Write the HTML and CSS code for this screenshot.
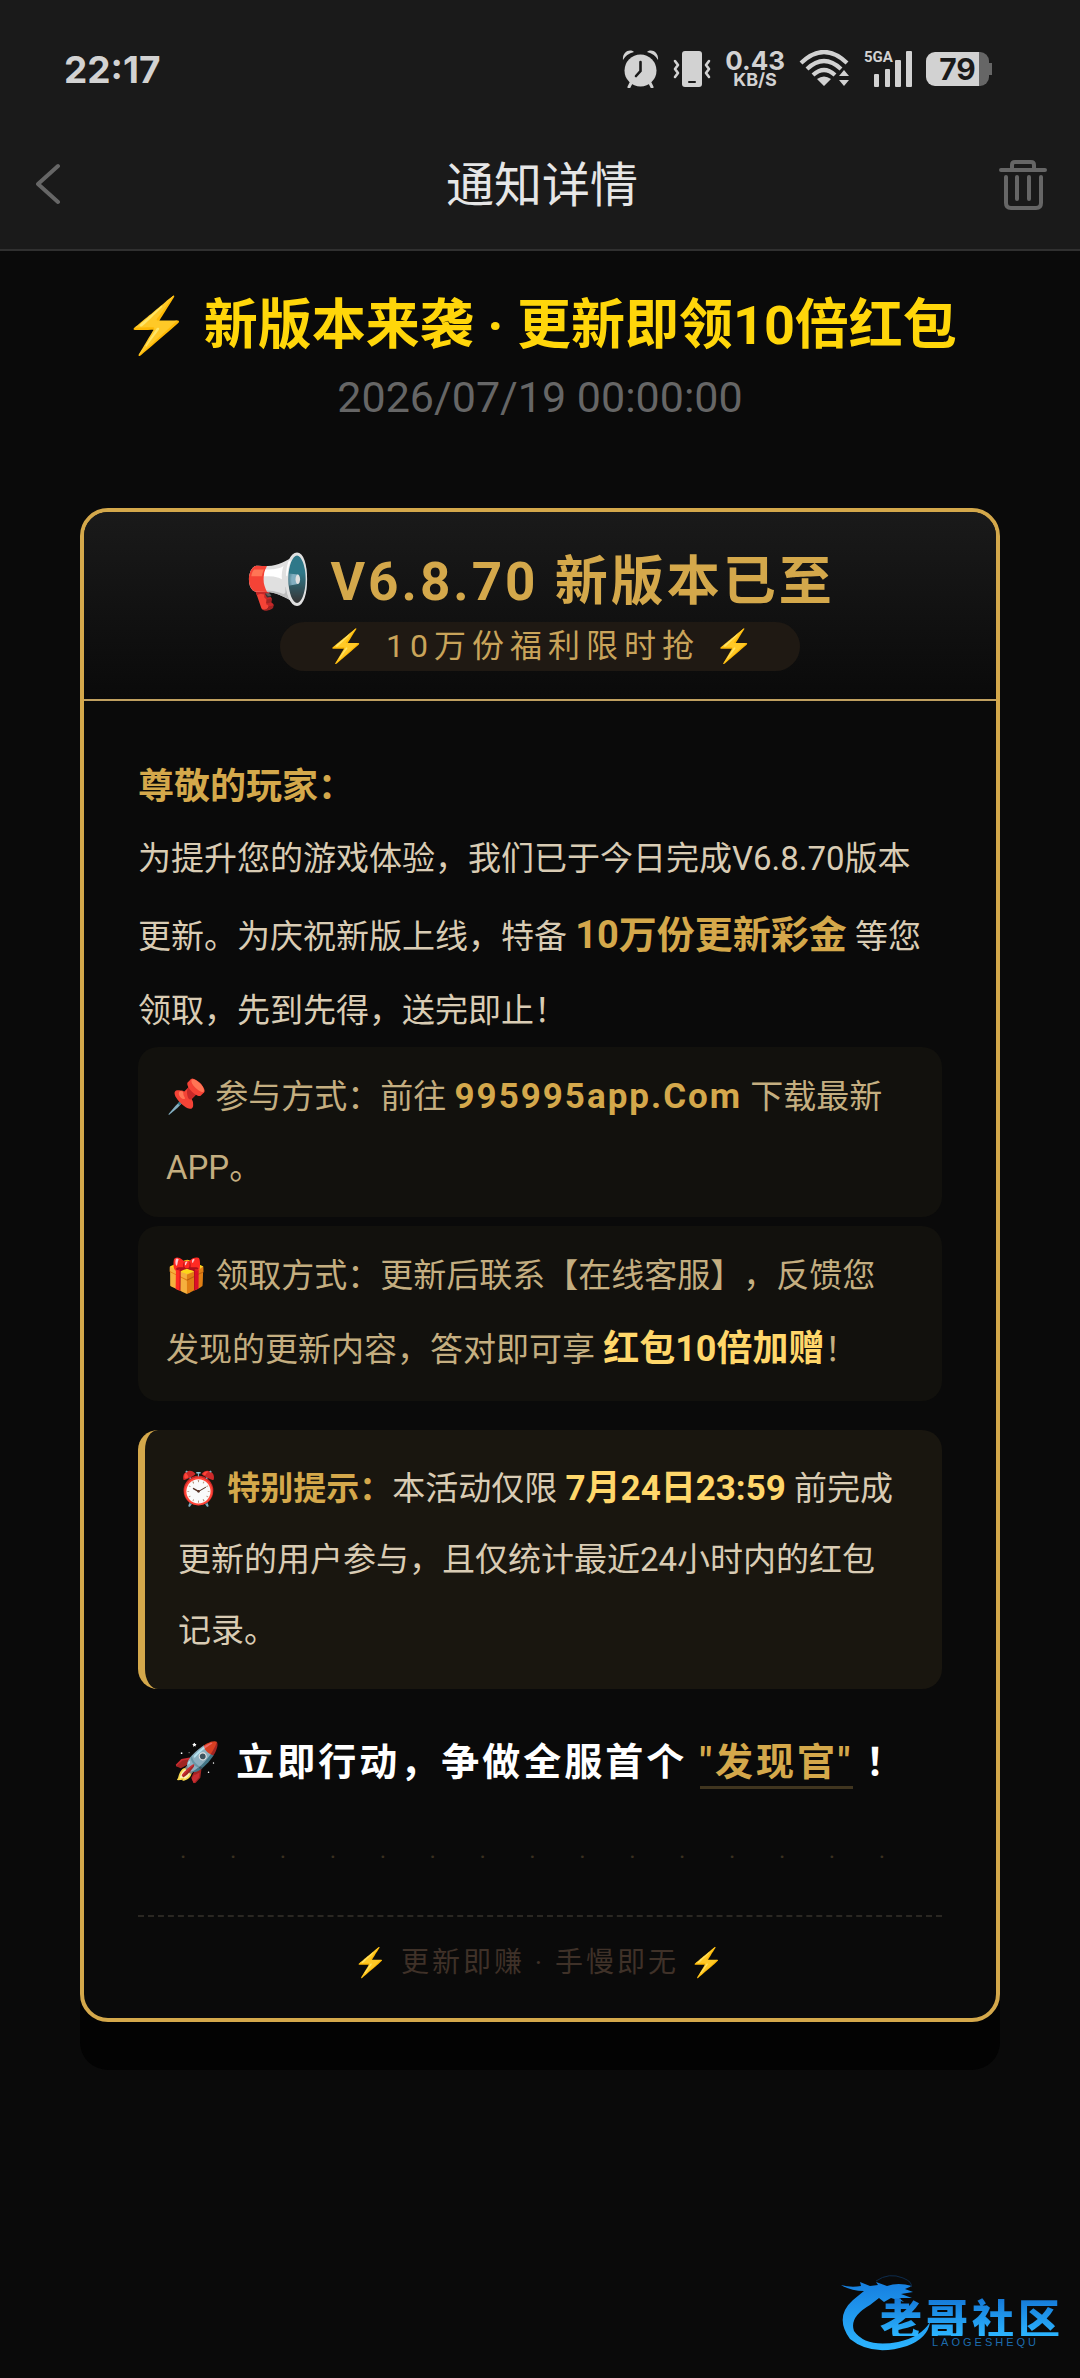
FILE: index.html
```html
<!DOCTYPE html>
<html lang="zh-CN">
<head>
<meta charset="utf-8">
<meta name="viewport" content="width=device-width, initial-scale=1">
<title>通知详情</title>
<link rel="stylesheet" href="styles.css">
</head>
<body>
<header class="topbar">
  <div class="status">
    <span class="clock">22:17</span>
    <div class="status-icons">
      <svg width="37" height="38" viewBox="0 0 37 38" fill="#d2d2d2" aria-hidden="true">
        <circle cx="18.500" cy="20.500" r="16"/>
        <path d="M1 10C0 3 7-2 12 2Q4 4 1 10ZM36 10C37 3 30-2 25 2Q33 4 36 10Z"/>
        <path d="M9 33l-2 4M28 33l2 4" stroke="#d2d2d2" stroke-width="3" stroke-linecap="round"/>
        <path d="M18.500 12v9l-4.500 5" fill="none" stroke="#1a1a1a" stroke-width="2.600" stroke-linecap="round"/>
      </svg>
      <svg width="38" height="38" viewBox="0 0 38 38" aria-hidden="true">
        <rect x="9" y="1" width="20" height="36" rx="3" fill="#d2d2d2"/>
        <rect x="15" y="31" width="8" height="2" rx="1" fill="#1a1a1a"/>
        <path d="M2 11l3 4-3 4 3 4-3 4M36 11l-3 4 3 4-3 4 3 4" fill="none" stroke="#d2d2d2" stroke-width="2.600" stroke-linecap="round" stroke-linejoin="round"/>
      </svg>
      <span class="speed"><b>0.43</b><small>KB/S</small></span>
      <svg width="51" height="38" viewBox="0 0 51 38" aria-hidden="true">
        <path d="M2 13Q25-9 48 13M8 19Q25 3 42 19M14 25Q25 15 36 25" fill="none" stroke="#d2d2d2" stroke-width="4.200"/>
        <path d="M18 29Q25 24 32 29L25 36ZM40 26l5-6 5 6ZM40 30h10l-5 6Z" fill="#d2d2d2"/>
      </svg>
      <span class="signal">
        <svg width="48" height="38" viewBox="0 0 48 38" fill="#d2d2d2" aria-hidden="true">
          <rect x="10" y="24" width="5" height="13" rx="1"/><rect x="21" y="19" width="5" height="18" rx="1"/><rect x="31" y="10" width="6" height="27" rx="1"/><rect x="42" y="1" width="6" height="36" rx="1"/>
        </svg>
        <span class="network">5GA</span>
      </span>
      <span class="battery"><span class="level">79</span></span>
    </div>
  </div>
  <nav class="nav">
    <button class="icon-button" aria-label="返回">
      <svg width="26" height="44" viewBox="0 0 26 44" fill="none" stroke="#666" stroke-width="4" stroke-linecap="round" stroke-linejoin="round"><path d="M22 4L2 22l20 18"/></svg>
    </button>
    <h1 class="nav-title">通知详情</h1>
    <button class="icon-button" aria-label="删除">
      <svg width="50" height="52" viewBox="0 0 50 52" fill="none" stroke="#666" stroke-width="4" stroke-linecap="round" stroke-linejoin="round"><path d="M3 12h44M14 11V7q0-3 3-3h16q3 0 3 3v4M8 19v26q0 5 5 5h25q5 0 5-5V19M19 19v22M31 19v22"/></svg>
    </button>
  </nav>
</header>

<main class="page">
  <h2 class="title">⚡ 新版本来袭 · 更新即领10倍红包</h2>
  <time class="date" datetime="2026-07-19T00:00:00">2026/07/19 00:00:00</time>

  <article class="card">
    <header class="card-head">
      <h3 class="card-title">📢 V6.8.70 新版本已至</h3>
      <p class="pill">⚡ 10万份福利限时抢 ⚡</p>
    </header>
    <div class="card-body">
      <p class="greeting">尊敬的玩家：</p>
      <p class="intro">为提升您的游戏体验，我们已于今日完成V6.8.70版本更新。为庆祝新版上线，特备 <strong>10万份更新彩金</strong> 等您领取，先到先得，送完即止！</p>
      <div class="steps">
        <p class="step">📌 参与方式：前往 <strong class="site">995995app.Com</strong> 下载最新APP。</p>
        <p class="step">🎁 领取方式：更新后联系【在线客服】，反馈您发现的更新内容，答对即可享 <strong class="bonus">红包10倍加赠</strong>！</p>
      </div>
      <p class="tip">⏰ <strong class="label">特别提示：</strong>本活动仅限 <strong class="deadline">7月24日23:59</strong> 前完成更新的用户参与，且仅统计最近24小时内的红包记录。</p>
      <p class="action">🚀 立即行动，争做全服首个 <span class="finder">"发现官"</span> ！</p>
      <div class="dots" aria-hidden="true"><span>·</span><span>·</span><span>·</span><span>·</span><span>·</span><span>·</span><span>·</span><span>·</span><span>·</span><span>·</span><span>·</span><span>·</span><span>·</span><span>·</span><span>·</span></div>
      <footer class="card-foot">⚡ <span>更新即赚 · 手慢即无</span> ⚡</footer>
    </div>
  </article>

  <div class="brand">
    <svg class="dragon" width="92" height="80" viewBox="0 0 92 80" aria-hidden="true">
      <defs><linearGradient id="blue" x1="0" y1="0" x2="0" y2="1"><stop offset="0" stop-color="#167fe0"/><stop offset="1" stop-color="#2cb5ff"/></linearGradient></defs>
      <path fill="url(#blue)" d="M0 11Q10 14 20 12L19 8L29 12L37 11L35 8L46 12Q57 8 71 12L64 15L72 18L60 20L71 24L58 24L63 28L50 24L43 28L38 24L29 31Q8 43 13 57Q25 74 57 68Q80 63 89 48Q87 64 66 72Q31 83 9 65Q-7 43 12 26L23 17Q10 17 0 11Z"/>
      <path fill="none" stroke="#0d2c4d" stroke-width="1" d="M35 7Q48-2 62 4Q72 8 70 13"/>
    </svg>
    <div class="brand-text"><span class="brand-name">老哥社区</span><span class="brand-latin">LAOGESHEQU</span></div>
  </div>
</main>
</body>
</html>
```
FILE: styles.css
```css
* { box-sizing: border-box; margin: 0; padding: 0; }
body {
  display: flex;
  flex-direction: column;
  min-height: 100vh;
  background: #0a0a0a;
  color: #d9ccb4;
  font-family: Roboto, "Noto Sans CJK SC", "Noto Color Emoji", sans-serif;
  font-size: 33px;
  text-spacing-trim: space-all;
}
svg { display: block; }

.topbar { padding-top: 20px; background: #1a1a1a; border-bottom: 2px solid #303030; }
.status { display: flex; align-items: center; justify-content: space-between; height: 98px; padding: 0 88px 0 64px; color: #d2d2d2; font-family: Inter, sans-serif; }
.clock { font-size: 37px; font-weight: 700; }
.status-icons { display: flex; align-items: center; gap: 14px; }
.speed { display: flex; flex-direction: column; align-items: center; }
.speed b { font-size: 26px; font-weight: 700; line-height: 22px; }
.speed small { font-size: 18px; font-weight: 700; line-height: 16px; }
.signal { position: relative; }
.network { position: absolute; left: 0; top: 0; font: 700 15px/15px Roboto, sans-serif; }
.battery { width: 66px; height: 34px; padding-right: 3px; display: flex; align-items: center; background: linear-gradient(#666, #666) right center / 4px 12px no-repeat; }
.level { flex: 1; height: 34px; border-radius: 9px; background: linear-gradient(90deg, #d2d2d2 84%, #666 84%); color: #1a1a1a; font-size: 30px; font-weight: 700; line-height: 34px; text-align: center; }

.nav { display: flex; align-items: center; justify-content: space-between; height: 131px; padding: 0 32px 0 36px; }
.icon-button { display: flex; align-items: center; width: 50px; height: 60px; border: 0; background: none; cursor: pointer; }
.nav-title { padding-top: 4px; color: #e6e6e6; font-size: 48px; font-weight: 400; line-height: 72px; }

.page { flex: 1; display: flex; flex-direction: column; padding: 39px 80px 24px; }
.title { color: #ffd60a; font-size: 54px; font-weight: 700; line-height: 72px; text-align: center; }
.date { color: #666; font-size: 43px; line-height: 70px; text-align: center; }

.card { margin-top: 76px; border: 4px solid #d4a84b; border-radius: 28px; box-shadow: 0 48px 0 #030303; background: #0a0a0a; overflow: hidden; }
.card-head { display: flex; flex-direction: column; align-items: center; padding: 36px 24px 28px; border-bottom: 2px solid #c0a060; background: linear-gradient(#1a1a1a, #0a0a0a); }
.card-title { margin-bottom: 6px; color: #d4a84b; font-size: 53px; font-weight: 700; line-height: 68px; letter-spacing: 3px; }
.pill { padding: 0 40px 0 46px; border-radius: 25px; background: #1f1913; color: #c9a45a; font-size: 32px; line-height: 49px; letter-spacing: 6px; }
.card-body { padding: 50px 54px 0; }
.greeting { color: #d4a84b; font-size: 36px; font-weight: 700; line-height: 72px; }
.intro { line-height: 72px; }
.intro strong { color: #d4a84b; font-size: 38px; line-height: 80px; }

.steps { display: flex; flex-direction: column; gap: 9px; }
.step { padding: 14px 36px 14px 28px; border-radius: 20px; background: #12110d; color: #c4ae80; line-height: 71px; }
.site { color: #d4a84b; font-size: 35px; letter-spacing: 2px; }
.bonus { color: #ffd76a; font-size: 36px; line-height: 76px; }
.tip { margin-top: 29px; padding: 23px 36px 23px 33px; border-left: 7px solid #d4a84b; border-radius: 20px; background: #19160f; line-height: 71px; }
.label { color: #d4a84b; }
.deadline { color: #ffd76a; font-size: 35px; }

.action { margin-top: 33px; color: #fff; font-size: 38px; font-weight: 700; line-height: 80px; letter-spacing: 3px; text-align: center; white-space: nowrap; }
.finder { padding-bottom: 2px; border-bottom: 3px solid #40351f; color: #d4a84b; }
.dots { display: flex; justify-content: space-between; padding: 0 57px 0 42px; margin: 35px 0 38px; color: #3a3020; font-size: 24px; line-height: 40px; }
.card-foot { padding: 26px 0 35px; border-top: 2px dashed #2a2722; font-size: 28px; line-height: 40px; letter-spacing: 3px; text-align: center; }
.card-foot span { color: #3f3128; }

.brand { display: flex; align-self: flex-end; margin: auto -64px 0 0; }
.brand-text { display: flex; flex-direction: column; margin: 24px 0 0 -53px; }
.brand-name { background: linear-gradient(#1478d8, #2cb5ff); background-clip: text; color: transparent; font-family: "Noto Sans CJK SC", sans-serif; font-size: 42px; font-weight: 900; line-height: 38px; letter-spacing: 4px; }
.brand-latin { padding-left: 52px; color: #1d6cae; font: 11px/12px "Liberation Sans", sans-serif; letter-spacing: 3px; }
```
